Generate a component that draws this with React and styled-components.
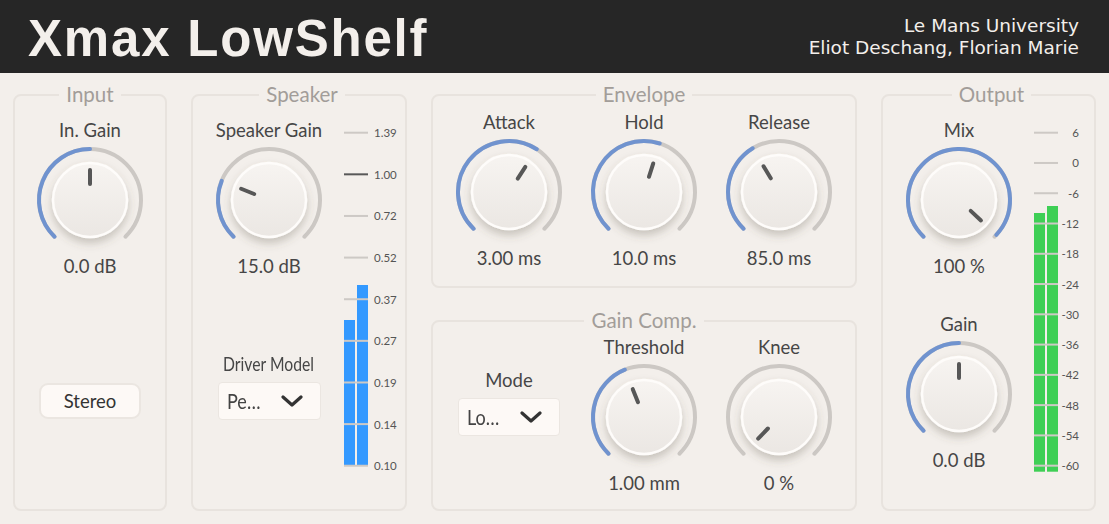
import React, { useId } from 'react';
import styled, { createGlobalStyle } from 'styled-components';

const GlobalStyle = createGlobalStyle`
  body {
    margin: 0;
    background: #f3efeb;
    font-family: Lato, "Open Sans", sans-serif;
  }
`

const Page = styled.div`
  width: 1109px;
  height: 524px;
  background: #f3efeb;
  overflow: hidden;
`

const Header = styled.header`
  height: 73px;
  background: #262626;
  display: flex;
  align-items: center;
  justify-content: space-between;
  padding: 0 30px 0 28px;
  box-sizing: border-box;
`

const Title = styled.h1`
  margin: 4px 0 0;
  font-family: "Liberation Sans", Arial, sans-serif;
  font-weight: 700;
  font-size: 51px;
  letter-spacing: 1.8px;
  color: #f3efeb;
`

const Credits = styled.div`
  font-family: "DejaVu Sans", Verdana, sans-serif;
  font-size: 18.5px;
  line-height: 22px;
  color: #f3efeb;
  text-align: right;
  margin-top: 1px;
`

const Main = styled.main`
  display: flex;
  gap: 24px;
  padding: 12px 12px 13px 13px;
  height: 451px;
  box-sizing: border-box;
`

const Panel = styled.fieldset`
  margin: 0;
  width: ${props => props.$width}px;
  height: ${props => props.$height || 426}px;
  padding: ${props => props.$padTop || 13}px 0 0 ${props => props.$padLeft || 0}px;
  border: 2px solid #e8e3de;
  border-radius: 8px;
  box-sizing: border-box;
  min-width: 0;
  display: flex;
  flex-direction: ${props => props.$row ? 'row' : 'column'};
  align-items: ${props => props.$row ? 'flex-start' : 'center'};
  gap: ${props => props.$gap || 0}px;
`

const Legend = styled.legend`
  margin: 0 auto;
  padding: 0 7px;
  font-size: 20.5px;
  line-height: 20px;
  color: #a29d99;
  position: relative;
  top: -1px;
`

const MiddleColumn = styled.div`
  display: flex;
  flex-direction: column;
  gap: 23px;
`

const KnobGrid = styled.div`
  display: grid;
  grid-template-columns: repeat(3, 135px);
  justify-content: center;
  width: 100%;
`

const Column = styled.div`
  width: 140px;
  display: flex;
  flex-direction: column;
  align-items: center;
`

const ControlBox = styled.div`
  display: flex;
  flex-direction: column;
  align-items: center;
  margin-top: ${props => props.$top || 0}px;
`

const Label = styled.div`
  height: 24px;
  line-height: 24px;
  font-size: 18.5px;
  color: #464646;
  white-space: nowrap;
  margin-bottom: ${props => props.$gap ?? 4}px;
`

/* combo labels and texts are squashed to fit, like the plugin does */
const Squashed = styled.span`
  display: inline-block;
  transform: scaleX(${props => props.$scale || 0.85});
  transform-origin: ${props => props.$origin || 'center'};
  font-size: ${props => props.$size || 18.5}px;
`

const Value = styled.div`
  height: 24px;
  line-height: 24px;
  font-size: 18.5px;
  color: #464646;
  white-space: nowrap;
`

const KnobSvg = styled.svg`
  display: block;
  overflow: visible;
`

const ModeBox = styled.div`
  display: flex;
  flex-direction: column;
  align-items: center;
  padding-top: ${props => props.$top || 0}px;
`

const Select = styled.div`
  width: ${props => props.$width || 103}px;
  height: 38px;
  box-sizing: border-box;
  border: 1px solid #ebe6e1;
  border-radius: 4px;
  background: #fdf9f6;
  display: flex;
  align-items: center;
  justify-content: space-between;
  padding: 0 17px 0 8px;
  color: #444;
`

const ToggleButton = styled.button`
  margin-top: ${props => props.$top || 0}px;
  width: 102px;
  height: 36px;
  border: 2px solid #ebe6e1;
  border-radius: 9px;
  background: #fdf9f6;
  font-family: Lato, sans-serif;
  font-size: 18.5px;
  color: #333;
  padding: 0;
`

const MeterSvg = styled.svg`
  display: block;
  flex-shrink: 0;
`

const RANGE = 136
const C = 54

const toXY = (a, r) => {
  const rad = a * Math.PI / 180
  return [C + r * Math.sin(rad), C - r * Math.cos(rad)]
}

const arc = (a0, a1, r) => {
  const [x0, y0] = toXY(a0, r)
  const [x1, y1] = toXY(a1, r)
  const large = a1 - a0 > 180 ? 1 : 0
  return `M ${x0} ${y0} A ${r} ${r} 0 ${large} 1 ${x1} ${y1}`
}

const Knob = ({ angle }) => {
  const id = useId().replace(/:/g, '')
  const [ix0, iy0] = toXY(angle, 16)
  const [ix1, iy1] = toXY(angle, 30)
  return (
    <KnobSvg width="108" height="108" viewBox="0 0 108 108">
      <defs>
        <linearGradient id={`g${id}`} x1="0" y1="0" x2="0" y2="1">
          <stop offset="0" stopColor="#f7f4f1" />
          <stop offset="1" stopColor="#ebe7e3" />
        </linearGradient>
        <filter id={`s${id}`} x="-40%" y="-40%" width="180%" height="180%">
          <feDropShadow dx="0" dy="5" stdDeviation="4.5" floodColor="#5a4f45" floodOpacity="0.28" />
        </filter>
      </defs>
      <path d={arc(-RANGE, RANGE, 51)} fill="none" stroke="#ccc8c4" strokeWidth="4" strokeLinecap="round" />
      {angle > -RANGE + 1 && (
        <path d={arc(-RANGE, angle, 51)} fill="none" stroke="#7093cf" strokeWidth="4" strokeLinecap="round" />
      )}
      <circle cx={C} cy={C} r="37" fill={`url(#g${id})`} stroke="#fefcfa" strokeWidth="2.5" filter={`url(#s${id})`} />
      <line x1={ix0} y1={iy0} x2={ix1} y2={iy1} stroke="#575757" strokeWidth="4" strokeLinecap="round" />
    </KnobSvg>
  )
}

const Control = ({ label, value, angle, top }) => (
  <ControlBox $top={top}>
    <Label>{label}</Label>
    <Knob angle={angle} />
    <Value>{value}</Value>
  </ControlBox>
)

const Chevron = () => (
  <svg width="22" height="12" viewBox="0 0 22 12">
    <polyline points="2,2 11,10 20,2" fill="none" stroke="#333" strokeWidth="3.2" strokeLinecap="round" strokeLinejoin="round" />
  </svg>
)

const Meter = ({ labels, y0, step, bars, bottom, color, width, labelX, anchor, highlight }) => (
  <MeterSvg width={width} height="360" viewBox={`0 0 ${width} 360`}>
    {bars.map((top, i) => (
      <rect key={i} x={i * 13} y={top} width="11" height={bottom - top} fill={color} />
    ))}
    {labels.map((t, i) => {
      const y = y0 + i * step
      return (
        <g key={t}>
          <rect x="0" y={y - 1} width="24" height="2" fill={i === highlight ? '#585858' : '#cdc9c5'} />
          <text x={labelX} y={y} textAnchor={anchor} dominantBaseline="central"
            fontFamily="Lato, sans-serif" fontSize="11.5" fill="#555">{t}</text>
        </g>
      )
    })}
  </MeterSvg>
)

const App = () => {
  return (
    <Page>
      <GlobalStyle />
      <Header>
        <Title>Xmax LowShelf</Title>
        <Credits>
          <div>Le Mans University</div>
          <div>Eliot Deschang, Florian Marie</div>
        </Credits>
      </Header>
      <Main>
        <Panel $width={154}>
          <Legend>Input</Legend>
          <Control label="In. Gain" value="0.0 dB" angle={0} />
          <ToggleButton $top={105}>Stereo</ToggleButton>
        </Panel>

        <Panel $width={216} $row $padLeft={6} $gap={5}>
          <Legend>Speaker</Legend>
          <Column>
            <Control label="Speaker Gain" value="15.0 dB" angle={-68} />
            <ControlBox $top={74}>
              <Label $gap={6}><Squashed $scale={0.85}>Driver Model</Squashed></Label>
              <Select>
                <Squashed $scale={0.88} $size={20.5} $origin="left">Pe…</Squashed>
                <Chevron />
              </Select>
            </ControlBox>
          </Column>
          <Meter
            labels={['1.39', '1.00', '0.72', '0.52', '0.37', '0.27', '0.19', '0.14', '0.10']}
            y0={14.7} step={41.63} bars={[202, 167]} bottom={347.7}
            color="#3399ff" width={60} labelX={30} anchor="start" highlight={1}
          />
        </Panel>

        <MiddleColumn>
          <Panel $width={426} $height={203} $padTop={5}>
            <Legend>Envelope</Legend>
            <KnobGrid>
              <Control label="Attack" value="3.00 ms" angle={33} />
              <Control label="Hold" value="10.0 ms" angle={18} />
              <Control label="Release" value="85.0 ms" angle={-31} />
            </KnobGrid>
          </Panel>
          <Panel $width={426} $height={200} $padTop={4}>
            <Legend>Gain Comp.</Legend>
            <KnobGrid>
              <ModeBox $top={33}>
                <Label $gap={6}>Mode</Label>
                <Select $width={102}>
                  <Squashed $scale={0.88} $size={20.5} $origin="left">Lo…</Squashed>
                  <Chevron />
                </Select>
              </ModeBox>
              <Control label="Threshold" value="1.00 mm" angle={-22} />
              <Control label="Knee" value="0 %" angle={-RANGE} />
            </KnobGrid>
          </Panel>
        </MiddleColumn>

        <Panel $width={215} $row $padLeft={6} $gap={5}>
          <Legend>Output</Legend>
          <Column>
            <Control label="Mix" value="100 %" angle={RANGE - 3} />
            <Control label="Gain" value="0.0 dB" angle={0} top={34} />
          </Column>
          <Meter
            labels={['6', '0', '-6', '-12', '-18', '-24', '-30', '-36', '-42', '-48', '-54', '-60']}
            y0={14.7} step={30.27} bars={[95, 88]} bottom={353.7}
            color="#3ecf55" width={50} labelX={45} anchor="end" highlight={-1}
          />
        </Panel>
      </Main>
    </Page>
  )
}

export default App
